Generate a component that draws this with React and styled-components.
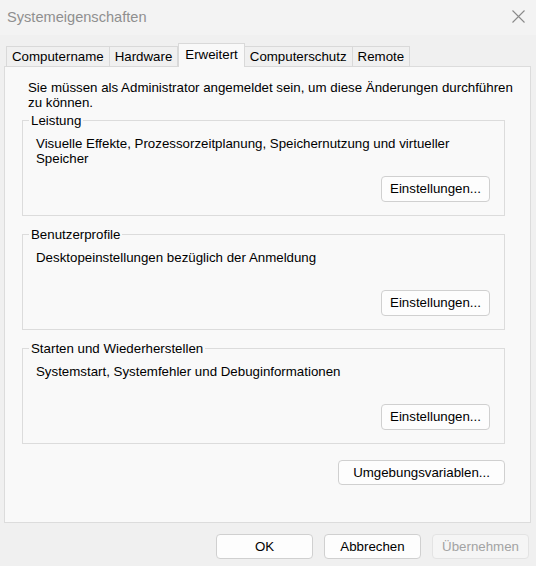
import React from "react";
import styled, { createGlobalStyle } from "styled-components";

const Global = createGlobalStyle`
  html, body { margin: 0; padding: 0; background: #f0f0f0; }
  body { font-family: "Liberation Sans", Arial, sans-serif; font-size: 13.3px; color: #000; }
  * { box-sizing: border-box; }
`;

const Window = styled.div`
  width: 536px;
  height: 566px;
  background: #f0f0f0;
  display: flex;
  flex-direction: column;
  overflow: hidden;
`;

const TitleBar = styled.div`
  height: 35px;
  flex: none;
  display: flex;
  align-items: center;
  justify-content: space-between;
  padding: 0 11px 1px 7px;
  background: #f3f3f3;
`;

const Title = styled.span`
  font-size: 14.6px;
  color: #8f8f8f;
`;

const CloseButton = styled.button`
  width: 14px;
  height: 14px;
  padding: 0;
  border: none;
  background: transparent;
  display: flex;
  align-items: center;
  justify-content: center;
  margin-top: -2px;
`;

const Body = styled.div`
  padding: 8px 5px 0 4px;
  display: flex;
  flex-direction: column;
`;

const TabRow = styled.div`
  display: flex;
  align-items: flex-end;
  padding-left: 2px;
  height: 24px;
  position: relative;
  z-index: 1;
  margin-bottom: -1px;
`;

const Tab = styled.div`
  height: ${(p) => (p.$active ? "24px" : "21px")};
  padding: ${(p) => (p.$active ? "0 6px 3px" : "0 5px 1px")};
  border: 1px solid #d9d9d9;
  border-bottom: ${(p) => (p.$active ? "none" : "1px solid #d9d9d9")};
  border-left: ${(p) => (p.$first || p.$active ? "1px solid #d9d9d9" : "none")};
  background: ${(p) => (p.$active ? "#f9f9f9" : "#f0f0f0")};
  display: flex;
  align-items: center;
  font-size: 13.3px;
  position: relative;
  z-index: ${(p) => (p.$active ? 2 : 1)};
  white-space: nowrap;
`;

const Panel = styled.div`
  height: 457px;
  background: #f9f9f9;
  border: 1px solid #dcdcdc;
  padding: 13px 25px 0 17px;
  display: flex;
  flex-direction: column;
`;

const Intro = styled.p`
  margin: 0 -16px 3px 6px;
  line-height: 15px;
`;

const Group = styled.fieldset`
  margin: 0 0 11px 0;
  border: 1px solid #dcdcdc;
  padding: 0;
  min-width: 0;
`;

const Legend = styled.legend`
  padding: 0 2px;
  margin-left: 6px;
  line-height: 15px;
`;

const GroupBody = styled.div`
  height: 87px;
  display: flex;
  flex-direction: column;
  justify-content: space-between;
  padding: 8px 14px 13px 13px;
`;

const GroupText = styled.div`
  line-height: 15px;
`;

const ButtonRow = styled.div`
  display: flex;
  justify-content: flex-end;
  gap: 11px;
  margin-top: ${(p) => p.$top || 0}px;
`;

const Button = styled.button`
  width: ${(p) => p.$w}px;
  height: ${(p) => p.$h || 26}px;
  border: 1px solid ${(p) => (p.disabled ? "#e3e3e3" : "#d0d0d0")};
  border-radius: 4px;
  background: ${(p) => (p.disabled ? "#f5f5f5" : "#fdfdfd")};
  color: ${(p) => (p.disabled ? "#a3a3a3" : "#000")};
  font-family: "Liberation Sans", Arial, sans-serif;
  font-size: 13.3px;
  padding: 0 0 1px;
  display: flex;
  align-items: center;
  justify-content: center;
`;

const Footer = styled.div`
  display: flex;
  justify-content: flex-end;
  gap: 11px;
  padding: 11px 2px 0 0;
`;

function CloseIcon() {
  return (
    <svg width="13" height="13" viewBox="0 0 13 13">
      <path d="M0.5 0.5 L12.5 12.5 M12.5 0.5 L0.5 12.5" stroke="#8a8a8a" strokeWidth="1.1" fill="none" />
    </svg>
  );
}

const groups = [
  {
    title: "Leistung",
    text: "Visuelle Effekte, Prozessorzeitplanung, Speichernutzung und virtueller Speicher",
  },
  { title: "Benutzerprofile", text: "Desktopeinstellungen bezüglich der Anmeldung" },
  { title: "Starten und Wiederherstellen", text: "Systemstart, Systemfehler und Debuginformationen" },
];

export default function App() {
  return (
    <Window>
      <Global />
      <TitleBar>
        <Title>Systemeigenschaften</Title>
        <CloseButton aria-label="Schließen">
          <CloseIcon />
        </CloseButton>
      </TitleBar>
      <Body>
        <TabRow>
          <Tab $first>Computername</Tab>
          <Tab>Hardware</Tab>
          <Tab $active>Erweitert</Tab>
          <Tab>Computerschutz</Tab>
          <Tab>Remote</Tab>
        </TabRow>
        <Panel>
          <Intro>
            Sie müssen als Administrator angemeldet sein, um diese Änderungen durchführen zu können.
          </Intro>
          {groups.map((g) => (
            <Group key={g.title}>
              <Legend>{g.title}</Legend>
              <GroupBody>
                <GroupText>{g.text}</GroupText>
                <ButtonRow>
                  <Button $w={109}>Einstellungen...</Button>
                </ButtonRow>
              </GroupBody>
            </Group>
          ))}
          <ButtonRow $top={5}>
            <Button $w={167} $h={25}>Umgebungsvariablen...</Button>
          </ButtonRow>
        </Panel>
        <Footer>
          <Button $w={97} $h={25}>OK</Button>
          <Button $w={97} $h={25}>Abbrechen</Button>
          <Button $w={97} $h={25} disabled>
            Übernehmen
          </Button>
        </Footer>
      </Body>
    </Window>
  );
}
